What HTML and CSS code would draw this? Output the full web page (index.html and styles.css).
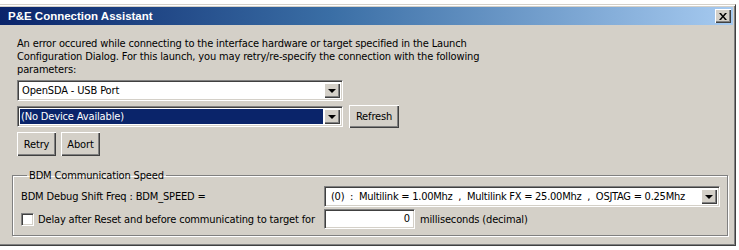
FILE: index.html
```html
<!DOCTYPE html>
<html lang="en">
<head>
    <meta charset="UTF-8">
    <title>P&amp;E Connection Assistant</title>
    <link rel="stylesheet" href="styles.css">
</head>
<body>
    <div class="window">
        <div class="titlebar">
            <span class="title">P&amp;E Connection Assistant</span>
            <button class="close-btn">
                <svg width="8" height="7" viewBox="0 0 8 7"><path d="M0 0h2l2 2.5L6 0h2L5 3.5 8 7H6L4 4.5 2 7H0l3-3.5z" fill="#000"/></svg>
            </button>
        </div>
        <div class="content">
            <p class="message">An error occured while connecting to the interface hardware or target specified in the Launch<br>Configuration Dialog. For this launch, you may retry/re-specify the connection with the following<br>parameters:</p>

            <div class="row first">
                <div class="combo">
                    <span class="combo-text">OpenSDA - USB Port</span>
                    <span class="combo-arrow"><span class="tri"></span></span>
                </div>
            </div>

            <div class="row">
                <div class="combo">
                    <span class="combo-text selected">(No Device Available)</span>
                    <span class="combo-arrow"><span class="tri"></span></span>
                </div>
                <button class="btn refresh">Refresh</button>
            </div>

            <div class="row actions">
                <button class="btn">Retry</button>
                <button class="btn">Abort</button>
            </div>

            <fieldset class="group">
                <legend>BDM Communication Speed</legend>
                <div class="group-row">
                    <span class="label">BDM Debug Shift Freq : BDM_SPEED =</span>
                    <div class="combo wide">
                        <span class="combo-text">(0)&nbsp; :&nbsp; Multilink = 1.00Mhz&nbsp; ,&nbsp; Multilink FX = 25.00Mhz&nbsp; ,&nbsp; OSJTAG = 0.25Mhz</span>
                        <span class="combo-arrow"><span class="tri"></span></span>
                    </div>
                </div>
                <div class="group-row second">
                    <label class="check-label"><span class="checkbox"></span>Delay after Reset and before communicating to target for</label>
                    <span class="field">0</span>
                    <span class="unit">milliseconds (decimal)</span>
                </div>
            </fieldset>
        </div>
    </div>
</body>
</html>
```

FILE: styles.css
```css
* {
    box-sizing: border-box;
    margin: 0;
    padding: 0;
}

body {
    background-color: #ffffff;
    font-family: 'DejaVu Sans Condensed', 'DejaVu Sans', Tahoma, sans-serif;
    font-stretch: condensed;
    font-size: 11px;
    letter-spacing: -0.15px;
    color: #000;
}

.window {
    width: 736px;
    height: 242px;
    margin-top: 4px;
    background-color: #d4d0c8;
    border-top: 1px solid #d4d0c8;
    border-right: 1px solid #404040;
    border-bottom: 1px solid #404040;
    box-shadow: inset 0 1px 0 #ffffff, inset -1px -1px 0 #808080;
    padding: 2px 2px 0 0;
}

.titlebar {
    height: 18px;
    display: flex;
    align-items: center;
    justify-content: space-between;
    padding: 0 2px 0 8px;
    background: linear-gradient(to right, #0a246a 0%, #3a6ea5 45%, #a6caf0 100%);
}

.title {
    color: #fff;
    font-family: 'Liberation Sans', Arial, sans-serif;
    font-stretch: normal;
    font-weight: bold;
    font-size: 11.5px;
    letter-spacing: 0;
}

.close-btn {
    width: 16px;
    height: 14px;
    display: flex;
    align-items: center;
    justify-content: center;
    background-color: #d4d0c8;
    border: none;
    box-shadow: inset 1px 1px 0 #ffffff, inset -1px -1px 0 #404040, inset -2px -2px 0 #808080;
}

.content {
    padding: 12px 0 0 17px;
}

.message {
    line-height: 13px;
}

.row {
    display: flex;
    align-items: center;
    gap: 6px;
    margin-top: 4px;
}

.combo {
    width: 326px;
    height: 21px;
    display: flex;
    align-items: center;
    background-color: #fff;
    border-top: 1px solid #808080;
    border-left: 1px solid #808080;
    border-right: 1px solid #ffffff;
    border-bottom: 1px solid #ffffff;
    box-shadow: inset 1px 1px 0 #404040, inset -1px -1px 0 #d4d0c8;
    padding: 2px;
}

.combo-text {
    flex: 1;
    height: 15px;
    line-height: 15px;
    padding-left: 2px;
    white-space: nowrap;
    overflow: hidden;
}

.combo-text.selected {
    background-color: #0a246a;
    color: #fff;
    padding-left: 1px;
}

.combo-arrow {
    width: 16px;
    height: 15px;
    margin-left: 1px;
    display: flex;
    align-items: center;
    justify-content: center;
    background-color: #d4d0c8;
    box-shadow: inset 1px 1px 0 #ffffff, inset -1px -1px 0 #404040, inset -2px -2px 0 #808080;
}

.tri {
    width: 0;
    height: 0;
    border-left: 4px solid transparent;
    border-right: 4px solid transparent;
    border-top: 4px solid #000;
}

.btn {
    height: 23px;
    padding: 0 5px;
    font-family: inherit;
    font-stretch: inherit;
    font-size: 11px;
    letter-spacing: inherit;
    background-color: #d4d0c8;
    border: none;
    box-shadow: inset 1px 1px 0 #ffffff, inset -1px -1px 0 #404040, inset -2px -2px 0 #808080;
}

.refresh {
    width: 50px;
}

.actions {
    gap: 5px;
    margin-top: 4px;
}

.actions .btn {
    width: 39px;
    height: 24px;
}

.group {
    width: 716px;
    height: 67px;
    margin: 13px 0 0 -5px;
    border: 1px solid #808080;
    box-shadow: 1px 1px 0 #ffffff, inset 1px 1px 0 #ffffff;
    padding: 0 7px 0 8px;
}

.group legend {
    padding: 0 2px;
    margin-left: 6px;
    line-height: 13px;
}

.group-row {
    display: flex;
    align-items: center;
    margin-top: 4px;
}

.group-row.second {
    margin-top: 2px;
}

.label {
    width: 303px;
}

.combo.wide {
    width: 396px;
}

.combo.wide .combo-text {
    padding-left: 4px;
    letter-spacing: -0.25px;
}

.check-label {
    width: 303px;
    display: flex;
    align-items: center;
    gap: 4px;
}

.checkbox {
    width: 13px;
    height: 13px;
    background-color: #fff;
    border-top: 1px solid #808080;
    border-left: 1px solid #808080;
    border-right: 1px solid #ffffff;
    border-bottom: 1px solid #ffffff;
    box-shadow: inset 1px 1px 0 #404040, inset -1px -1px 0 #d4d0c8;
}

.field {
    width: 91px;
    height: 20px;
    line-height: 18px;
    text-align: right;
    padding-right: 4px;
    background-color: #fff;
    border-top: 1px solid #808080;
    border-left: 1px solid #808080;
    border-right: 1px solid #ffffff;
    border-bottom: 1px solid #ffffff;
    box-shadow: inset 1px 1px 0 #404040, inset -1px -1px 0 #d4d0c8;
}

.unit {
    margin-left: 5px;
}
```
